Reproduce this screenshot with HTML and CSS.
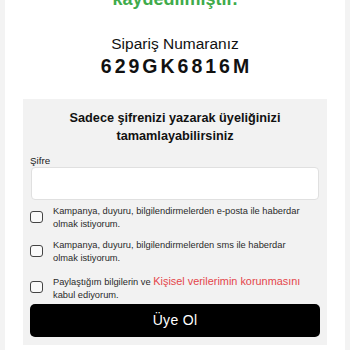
FILE: index.html
```html
<!DOCTYPE html>
<html lang="tr">
<head>
<meta charset="utf-8">
<link rel="stylesheet" href="styles.css">
</head>
<body>
<div class="page">
  <h1 class="success">kaydedilmiştir.</h1>
  <div class="order-label">Sipariş Numaranız</div>
  <div class="order-no">629GK6816M</div>
  <form class="card">
    <h2 class="card-title">Sadece şifrenizi yazarak üyeliğinizi tamamlayabilirsiniz</h2>
    <label class="field-label">Şifre</label>
    <input class="field" type="password">
    <div class="checks">
      <label class="check">
        <span class="box"></span>
        <span class="check-text">Kampanya, duyuru, bilgilendirmelerden e-posta ile haberdar olmak istiyorum.</span>
      </label>
      <label class="check">
        <span class="box"></span>
        <span class="check-text">Kampanya, duyuru, bilgilendirmelerden sms ile haberdar olmak istiyorum.</span>
      </label>
      <label class="check">
        <span class="box"></span>
        <span class="check-text">Paylaştığım bilgilerin ve <a class="link">Kişisel verilerimin korunmasını</a> kabul ediyorum.</span>
      </label>
    </div>
    <button class="submit" type="button">Üye Ol</button>
  </form>
</div>
</body>
</html>
```
FILE: styles.css
```css
html, body {
  margin: 0;
  padding: 0;
}
body {
  background: #f3f3f3;
  font-family: "Liberation Sans", Arial, sans-serif;
  color: #1a1a1a;
  height: 350px;
  overflow: hidden;
}
.page {
  margin: 0 5px;
  background: #ffffff;
  height: 350px;
  padding: 0 18px;
  display: flex;
  flex-direction: column;
}
.success {
  margin: -12px 0 0;
  font-size: 18px;
  line-height: 22px;
  font-weight: bold;
  color: #3fab4b;
  text-align: center;
}
.order-label {
  margin-top: 23.5px;
  font-size: 15.5px;
  line-height: 20px;
  text-align: center;
  color: #111;
}
.order-no {
  font-size: 19.5px;
  line-height: 24px;
  font-weight: bold;
  letter-spacing: 3px;
  text-align: center;
  color: #111;
  padding-left: 3px;
}
.card {
  margin: 21px 0 0;
  background: #f2f2f2;
  padding: 10px 7px 8px;
  display: flex;
  flex-direction: column;
}
.card-title {
  margin: 0 10px;
  font-size: 12.7px;
  line-height: 18px;
  font-weight: bold;
  text-align: center;
  color: #111;
}
.field-label {
  margin-top: 10px;
  font-size: 9.8px;
  line-height: 12px;
  color: #222;
}
.field {
  box-sizing: border-box;
  height: 33px;
  margin: 0 1px 0 1px;
  background: #fff;
  border: 1px solid #e0e0e0;
  border-radius: 4px;
}
.checks {
  margin-top: 5px;
  display: flex;
  flex-direction: column;
  gap: 8px;
}
.check {
  display: flex;
  align-items: center;
  gap: 10px;
}
.box {
  flex: none;
  box-sizing: border-box;
  width: 13px;
  height: 12px;
  border: 1.5px solid #444;
  border-radius: 3px;
  background: #fafafa;
  margin-top: -1px;
}
.check-text {
  font-size: 9.3px;
  line-height: 13px;
  color: #2a2a2a;
  padding-right: 12px;
}
.link {
  font-size: 10.9px;
  line-height: 16px;
  color: #e4464b;
}
.submit {
  margin-top: 2px;
  height: 33px;
  background: #000;
  color: #fff;
  border: none;
  border-radius: 5px;
  font-family: "Liberation Sans", Arial, sans-serif;
  font-size: 14px;
  letter-spacing: 0.3px;
}
```
